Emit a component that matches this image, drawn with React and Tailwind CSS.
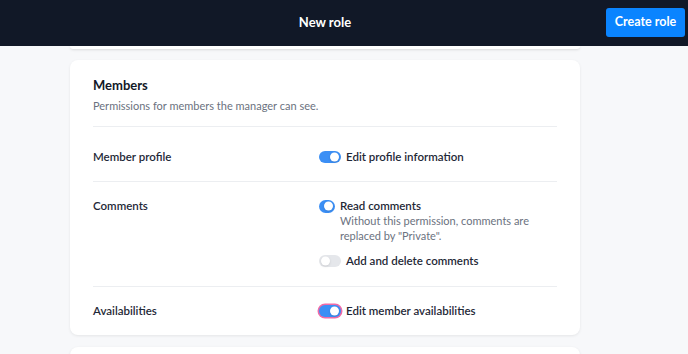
import React from 'react';

function Toggle({ on, className = '', ring = false }) {
    return (
        <span
            className={`relative inline-flex shrink-0 items-center rounded-full ${on ? 'bg-[#3b8ff5]' : 'bg-[#e5e7eb]'} ${ring ? 'ring-[1.5px] ring-[#f06ba8]' : ''} ${className}`}
        >
            <span
                className={`absolute top-1/2 -translate-y-1/2 h-[9px] w-[9px] rounded-full bg-white shadow-sm ${on ? 'right-[2px]' : 'left-[2px]'}`}
            ></span>
        </span>
    );
}

function Option({ on, label, desc, toggleClass = 'w-[22px] h-[12px]', ring }) {
    return (
        <div className="flex items-start gap-[5px]">
            <div className="h-[20px] flex items-center">
                <Toggle on={on} className={toggleClass} ring={ring} />
            </div>
            <div>
                <p className="text-[11.5px] leading-[20px] font-semibold text-[#1f2937]">{label}</p>
                {desc && <p className="text-[11px] leading-[15px] text-[#6b7280] -mt-[3px]">{desc}</p>}
            </div>
        </div>
    );
}

export default function App() {
    return (
        <div className="min-h-[354px] bg-[#f7f8fa]" style={{ fontFamily: 'Lato, "Noto Sans", sans-serif' }}>
            <header className="h-[46px] bg-[#111827] relative">
                <div className="ml-[70px] w-[510px] h-full flex items-center justify-center">
                    <h1 className="text-white text-[13px] font-bold">New role</h1>
                </div>
                <button className="absolute right-[3px] top-[8px] h-[29px] w-[79px] rounded-[3px] bg-[#0a84ff] text-white text-[12.5px] font-bold">
                    Create role
                </button>
            </header>

            <div className="ml-[70px] w-[510px]">
                <div className="h-[3px] bg-white rounded-b-lg shadow-sm"></div>

                <section className="mt-[11px] bg-white rounded-lg shadow-[0_1px_3px_rgba(0,0,0,0.08)] px-[23px] pb-[14px]">
                    <div className="pt-[14px] pb-[12px] border-b border-[#eceef1]">
                        <h2 className="text-[13px] leading-[22px] font-bold text-[#111827]">Members</h2>
                        <p className="text-[11px] leading-[16px] text-[#6b7280] mt-[2px]">Permissions for members the manager can see.</p>
                    </div>

                    <div className="flex pt-[20px] pb-[14px] border-b border-[#eceef1]">
                        <div className="w-[226px] text-[11.5px] leading-[20px] font-semibold text-[#1f2937]">Member profile</div>
                        <Option on label="Edit profile information" />
                    </div>

                    <div className="flex pt-[14px] pb-[15px] border-b border-[#eceef1]">
                        <div className="w-[226px] text-[11.5px] leading-[20px] font-semibold text-[#1f2937]">Comments</div>
                        <div className="flex flex-col gap-[8px]">
                            <Option
                                on
                                label="Read comments"
                                toggleClass="w-[16px] h-[13px]"
                                desc={<>Without this permission, comments are<br />replaced by "Private".</>}
                            />
                            <Option on={false} label="Add and delete comments" />
                        </div>
                    </div>

                    <div className="flex pt-[14px]">
                        <div className="w-[226px] text-[11.5px] leading-[20px] font-semibold text-[#1f2937]">Availabilities</div>
                        <Option on ring label="Edit member availabilities" />
                    </div>
                </section>

                <div className="mt-[12px] h-[20px] bg-white rounded-t-lg shadow-sm"></div>
            </div>
        </div>
    );
}
